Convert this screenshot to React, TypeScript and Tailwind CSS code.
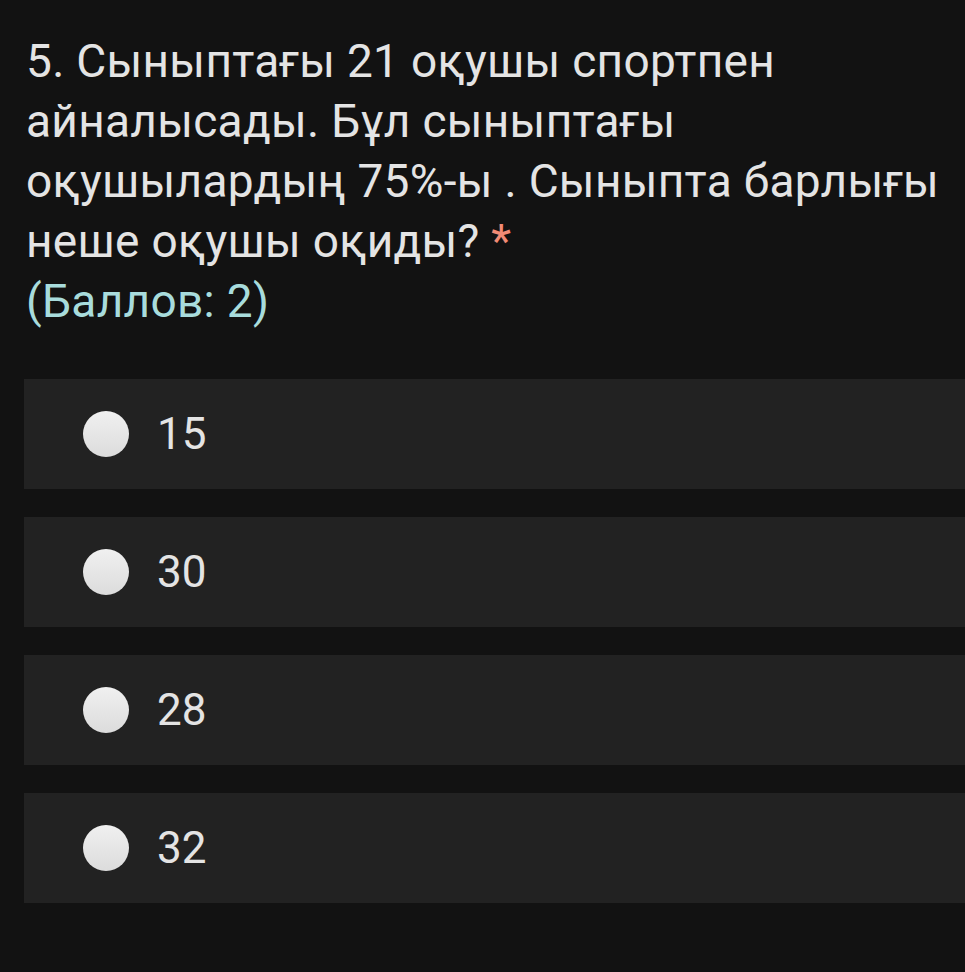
const options = ["15", "30", "28", "32"];

export default function App() {
    return (
        <div className="min-h-[972px] w-full bg-[#121212] pt-[31px] font-['Roboto',sans-serif]">
            <div className="pl-[26px] pr-2 text-[46px] leading-[60px] tracking-[0.3px] text-[#e4e4e4]">
                <p className="whitespace-nowrap">
                    5. Сыныптағы 21 оқушы спортпен<br />
                    айналысады. Бұл сыныптағы<br />
                    оқушылардың 75%-ы . Сыныпта барлығы<br />
                    неше оқушы оқиды? <span className="text-[#f28b75]">*</span>
                </p>
                <p className="text-[#a8dcdc]">(Баллов: 2)</p>
            </div>

            <div className="mt-[48px] flex flex-col gap-[28px] pl-6">
                {options.map((opt) => (
                    <div key={opt} className="flex h-[110px] items-center bg-[#222222] pl-[59px]">
                        <span className="h-[46px] w-[46px] rounded-full bg-gradient-to-b from-[#f0f0f0] to-[#dcdcdc]" />
                        <span className="ml-[28px] text-[44px] text-[#e4e4e4]">{opt}</span>
                    </div>
                ))}
            </div>
        </div>
    );
}
